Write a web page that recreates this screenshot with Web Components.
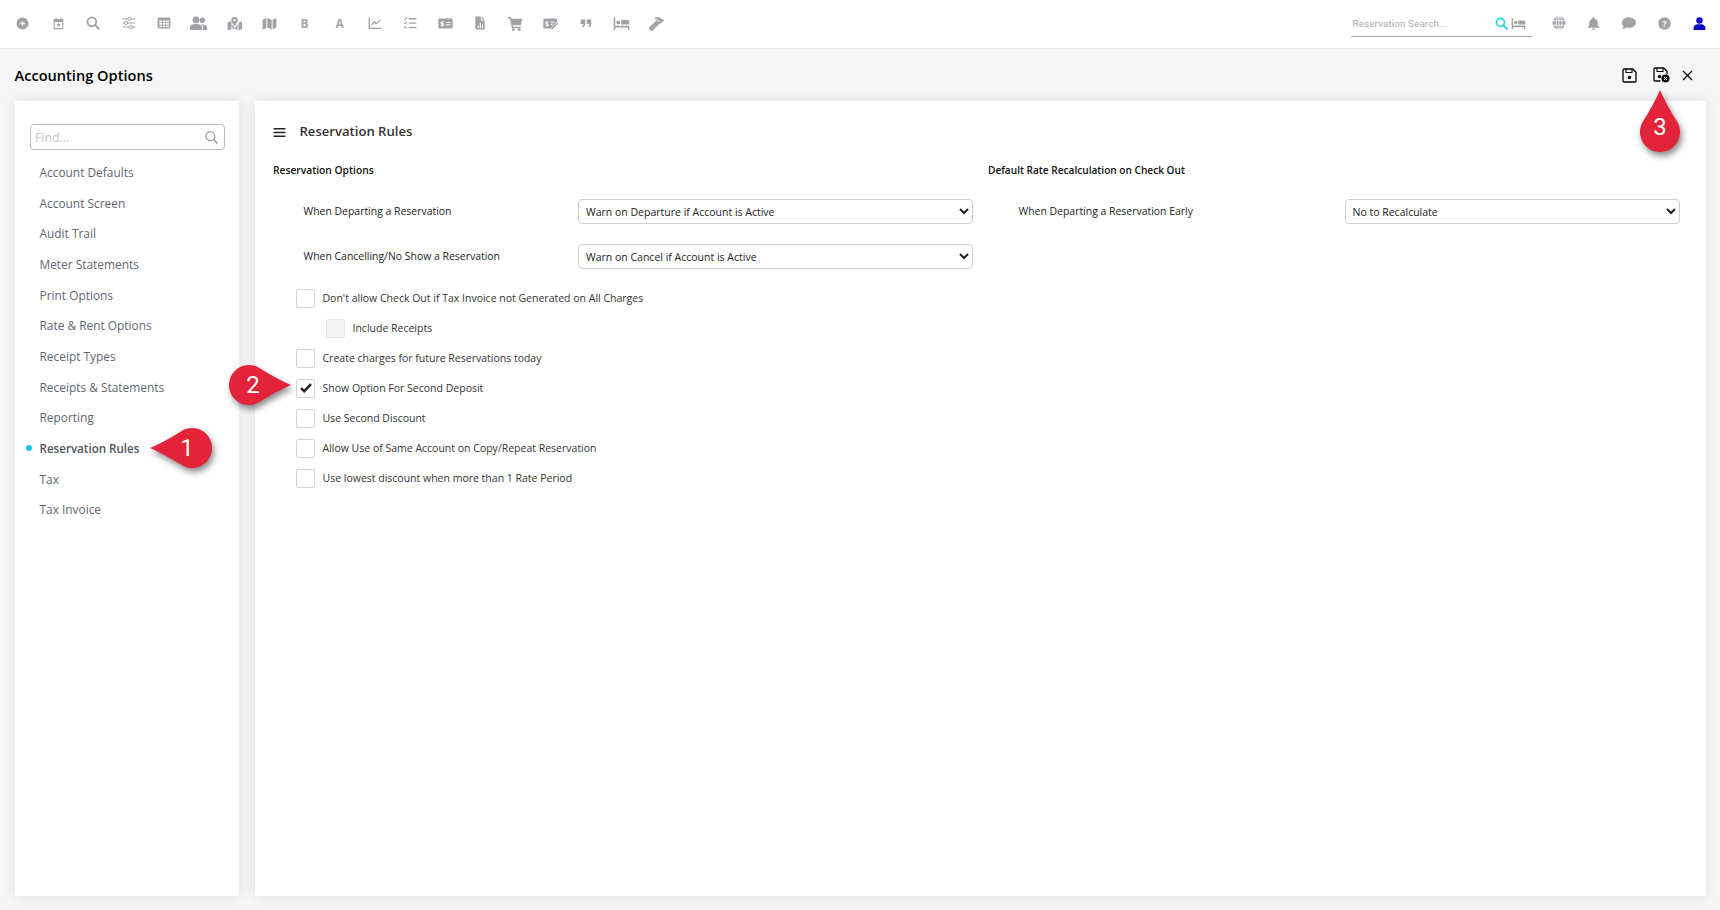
<!DOCTYPE html>
<html>
<head>
<meta charset="utf-8">
<title>Accounting Options</title>
<style>
html, body { margin: 0; height: 100%; }
body {
    background: #f6f6f7;
    font-family: "Open Sans", "Liberation Sans", sans-serif;
    overflow: hidden;
}
</style>
</head>
<body>
<app-shell>
    <top-bar slot="top"></top-bar>
    <page-header slot="header" heading="Accounting Options"></page-header>
    <side-nav slot="side">
        <nav-item>Account Defaults</nav-item>
        <nav-item>Account Screen</nav-item>
        <nav-item>Audit Trail</nav-item>
        <nav-item>Meter Statements</nav-item>
        <nav-item>Print Options</nav-item>
        <nav-item>Rate &amp; Rent Options</nav-item>
        <nav-item>Receipt Types</nav-item>
        <nav-item>Receipts &amp; Statements</nav-item>
        <nav-item>Reporting</nav-item>
        <nav-item active>Reservation Rules</nav-item>
        <nav-item>Tax</nav-item>
        <nav-item>Tax Invoice</nav-item>
    </side-nav>
    <rules-panel slot="main" heading="Reservation Rules">
        <div slot="left">
            <section-head>Reservation Options</section-head>
            <form-row label="When Departing a Reservation" value="Warn on Departure if Account is Active" style="--label-w:305px;--select-w:395px"></form-row>
            <form-row label="When Cancelling/No Show a Reservation" value="Warn on Cancel if Account is Active" style="--label-w:305px;--select-w:395px;margin-top:20px"></form-row>
            <check-list>
                <check-row>Don't allow Check Out if Tax Invoice not Generated on All Charges</check-row>
                <check-row sub disabled>Include Receipts</check-row>
                <check-row>Create charges for future Reservations today</check-row>
                <check-row checked>Show Option For Second Deposit</check-row>
                <check-row>Use Second Discount</check-row>
                <check-row>Allow Use of Same Account on Copy/Repeat Reservation</check-row>
                <check-row>Use lowest discount when more than 1 Rate Period</check-row>
            </check-list>
        </div>
        <div slot="right">
            <section-head style="font-size:10.100px">Default Rate Recalculation on Check Out</section-head>
            <form-row label="When Departing a Reservation Early" value="No to Recalculate" style="--label-w:356.5px;--select-w:335px"></form-row>
        </div>
    </rules-panel>
</app-shell>
<call-out num="1" dir="left" x="150" y="448"></call-out>
<call-out num="2" dir="right" x="291" y="385"></call-out>
<call-out num="3" dir="up" x="1660" y="90"></call-out>

<script>
const ICONS = {
    add: '<circle cx="12" cy="12" r="11"/><path d="M7.500 12h9M12 8.500v7" stroke="#fff" stroke-width="2.400" fill="none"/>',
    calendar: '<path d="M6.500 1.500h2v3h-2zM15.500 1.500h2v3h-2z"/><path d="M4.500 3.500h15a1.500 1.500 0 0 1 1.500 1.500v16a1.500 1.500 0 0 1-1.500 1.500h-15a1.500 1.500 0 0 1-1.500-1.500V5a1.500 1.500 0 0 1 1.500-1.500zm.5 5.500V20.500h14V9z" fill-rule="evenodd"/><path d="M12 10.500l1.200 2.600 2.800.3-2.100 1.900.6 2.800-2.500-1.400-2.500 1.400.6-2.800-2.100-1.900 2.800-.3z"/>',
    search: '<circle cx="10" cy="10" r="7.500" fill="none" stroke-width="3" stroke="currentColor"/><path d="M15.500 15.500l6.500 6.500" stroke="currentColor" stroke-width="3.400" stroke-linecap="round"/>',
    sliders: '<g stroke="currentColor" stroke-width="1.700" fill="none"><path d="M1 5h9M16 5h7M1 12h3M10 12h13M1 19h11M18 19h5"/><circle cx="13" cy="5" r="2.700"/><circle cx="7" cy="12" r="2.700"/><circle cx="15" cy="19" r="2.700"/></g>',
    table: '<rect x="1" y="2.500" width="22" height="19" rx="2.500"/><path d="M4 7.500h4.500v3H4zM10 7.500h4.500v3H10zM16 7.500h4.500v3H16zM4 12h4.500v3H4zM10 12h4.500v3H10zM16 12h4.500v3H16zM4 16.500h4.500v2.500H4zM10 16.500h4.500v2.500H10zM16 16.500h4.500v2.500H16z" fill="#fff"/>',
    people: '<circle cx="8.500" cy="7" r="4.800"/><circle cx="17.500" cy="7.500" r="3.800"/><path d="M0 21v-3.500C0 14 4 12.800 8.500 12.800S17 14 17 17.500V21z"/><path d="M15.500 13c4 .1 8.500 1.300 8.500 4.500V21h-5.500v-3.500c0-1.800-1.300-3.500-3-4.500z"/>',
    mapPin: '<path d="M12 1.500a5.300 5.300 0 0 1 5.300 5.300c0 3-3.300 6.600-5.300 9-2-2.400-5.300-6-5.300-9A5.300 5.300 0 0 1 12 1.500zm0 3.500a1.800 1.800 0 1 0 0 3.600 1.800 1.800 0 0 0 0-3.600z" fill-rule="evenodd"/><path d="M1 11l4.500-1.800c.4 1.300 1 2.400 1.700 3.500V22L1 24zM8.500 14.500c1.100 1.500 2.300 2.800 3.500 4.200v3.700l-3.500-1.300zM13.500 18.500c1.400-1.500 2.400-3 3.500-4.700V22l-3.500.8zM18.500 11.500l5.500-2.300v12.500L18.500 24z" transform="translate(0 -1)"/>',
    map: '<path d="M1 6l6-3v16l-6 3zM8.500 3l7 3v15.500l-7-3zM17 6l6-3v15.500l-6 3z"/>',
    chart: '<path d="M1 2.500h2.200V20H23v2.200H1z"/><path d="M6 15l5-5 3.500 3L21 6.500" fill="none" stroke="currentColor" stroke-width="2"/>',
    tasks: '<path d="M2 4.500l1.500 1.500L7 2.500M2 12l1.500 1.500L7 10" fill="none" stroke="currentColor" stroke-width="1.800"/><circle cx="4" cy="19.500" r="2"/><path d="M10 3.500h13v2.400H10zM10 11h13v2.400H10zM10 18.500h13v2.400H10z"/>',
    moneyCheck: '<rect x="0.500" y="4" width="23" height="16" rx="2"/><path d="M13 9.500h7v1.800h-7zM13 13h7v1.800h-7z" fill="#fff"/><text x="3.500" y="16.500" font-size="11" font-weight="700" fill="#fff" font-family="Open Sans, sans-serif">$</text>',
    fileChart: '<path d="M4 1h9.500v6.500H20V22a1 1 0 0 1-1 1H5a1 1 0 0 1-1-1z"/><path d="M15 1l5 5h-5z"/><path d="M8 17h2v3.500H8zM11.500 12h2v8.500h-2zM15 15h2v5.500h-2z" fill="#fff"/>',
    cart: '<path d="M0 1.500h4.600l.6 2.800H23l-2.400 10.400H7.800l.5 2.300H20v2.500H6.200L3 4H0z"/><circle cx="8.500" cy="21.800" r="2.200"/><circle cx="18" cy="21.800" r="2.200"/>',
    moneyEdit: '<path d="M2.500 4h18a2 2 0 0 1 2 2v3l-8.500 8.500-1 2.500H2.500a2 2 0 0 1-2-2V6a2 2 0 0 1 2-2z"/><path d="M12.500 9h6v1.700h-6zM12.500 12.500h3v1.700h-3z" fill="#fff"/><text x="3" y="15.500" font-size="10.500" font-weight="700" fill="#fff" font-family="Open Sans, sans-serif">$</text><path d="M23 10.500l1.500 1.500-8.500 8.500-3 1 1-3z"/>',
    quote: '<path d="M1.500 5h9v9c0 3.800-2.300 6-6 6.500v-3c1.800-.3 2.500-1.300 2.500-3.500H1.500zM13.500 5h9v9c0 3.800-2.300 6-6 6.500v-3c1.800-.3 2.500-1.300 2.500-3.500h-5.500z"/>',
    bed: '<path d="M1 3.500h2.200V15H23v6h-2.200v-3.200H3.200V21H1z"/><circle cx="7.500" cy="10.500" r="2.800"/><path d="M11.500 7H20a3 3 0 0 1 3 3v3.500H11.500z"/>',
    hammer: '<path d="M9 3.500c3.500-2.500 7.500-2.500 10 0l1.200 1.200 1.300-.3 2.500 2.500L18.500 12.500 16 10l.3-1.500-1.800-1.800C13 5.500 11 5 9 5z"/><path d="M12.500 6.500l5 5L6 23.200a2.500 2.500 0 0 1-3.500 0l-1.700-1.700a2.500 2.500 0 0 1 0-3.500z"/>',
    globe: '<circle cx="12" cy="12" r="11"/><g fill="none" stroke="#fff" stroke-width="1.400"><ellipse cx="12" cy="12" rx="5" ry="11"/><path d="M1 8h22M1 16h22M12 1v22"/></g>',
    bell: '<path d="M12 24a3 3 0 0 0 3-3H9a3 3 0 0 0 3 3zM20 16v-5.500c0-3.800-2.500-6.700-6-7.500V2a2 2 0 0 0-4 0v1c-3.500.8-6 3.700-6 7.500V16l-2.500 2.500V20h21v-1.500z"/>',
    chat: '<path d="M12 2C5.400 2 0 6.200 0 11.500c0 2.300 1 4.400 2.700 6C2.100 19.700 0 22 0 22c3.500 0 6-1.200 7.500-2.400 1.400.5 2.900.7 4.500.7 6.600 0 12-4.100 12-8.800S18.600 2 12 2z"/>',
    help: '<circle cx="12" cy="12" r="11.500"/><text x="12" y="18" text-anchor="middle" font-size="16" font-weight="700" fill="#fff" font-family="Open Sans, sans-serif">?</text>',
    user: '<circle cx="12" cy="6.500" r="6"/><path d="M1 24v-3.500C1 16 5 13.500 8.500 13.500h7c3.500 0 7.500 2.500 7.500 7V24z"/>',
    menu: '<path d="M1 3.500h22v3H1zM1 10.500h22v3H1zM1 17.500h22v3H1z"/>'
};

function svgIcon(name, size, color){
    return `<svg xmlns="http://www.w3.org/2000/svg" viewBox="0 0 24 24" width="${size}" height="${size}" fill="currentColor" style="color:${color};display:block">${ICONS[name]}</svg>`;
}

class AppShell extends HTMLElement{
    constructor(){
        super();
        this.attachShadow({mode:'open'});
        this.shadowRoot.innerHTML = `
        <style>
        :host{ display:flex; flex-direction:column; height:910px; }
        .cards{
            flex:1;
            min-height:0;
            display:grid;
            grid-template-columns:224px 1fr;
            gap:16px;
            padding:0 14px 14px 15px;
        }
        </style>
        <slot name="top"></slot>
        <slot name="header"></slot>
        <div class="cards">
            <slot name="side"></slot>
            <slot name="main"></slot>
        </div>`;
    }
}

class TopBar extends HTMLElement{
    constructor(){
        super();
        this.attachShadow({mode:'open'});
        const left = ['add','calendar','search','sliders','table','people','mapPin','map','B','A','chart','tasks','moneyCheck','fileChart','cart','moneyEdit','quote','bed','hammer'];
        const sizes = {add:13, calendar:13, search:14, sliders:14, table:14, people:17, mapPin:15, map:15, chart:14, tasks:14, moneyCheck:15, fileChart:14, cart:15, moneyEdit:15, quote:12, bed:17, hammer:15};
        const tools = left.map(n => ICONS[n]
            ? `<span class="tool">${svgIcon(n, sizes[n], '#a0a2a7')}</span>`
            : `<span class="tool txt">${n}</span>`).join('');
        this.shadowRoot.innerHTML = `
        <style>
        :host{
            display:flex;
            align-items:center;
            height:48px;
            box-sizing:content-box;
            background:#fff;
            border-bottom:1px solid #ecedf4;
            padding-left:5.400px;
            font-family:"Open Sans","Liberation Sans",sans-serif;
        }
        .tool{ width:35.200px; display:flex; justify-content:center; align-items:center; height:24px; flex:none; position:relative; top:-1px; }
        .txt{ color:#a4a6aa; font-size:12px; font-weight:700; }
        .search{
            margin-left:auto;
            width:178px;
            height:25px;
            margin-top:-1px;
            box-sizing:content-box;
            border-bottom:1px solid #a8a9ad;
            display:flex;
            align-items:center;
            font-size:9.900px;
            color:#a9abae;
            padding-left:2px;
            padding-right:1px;
        }
        .search span{ flex:1; font-family:Roboto,"Open Sans",sans-serif; letter-spacing:.1px; }
        .search svg{ margin-right:3px; }
        .search svg:last-of-type{ margin-right:5px; }
        .right{ display:flex; margin-left:9.500px; margin-right:3px; }
        .right .tool{ width:35.200px; }
        </style>
        ${tools}
        <div class="search">
            <span>Reservation Search...</span>
            ${svgIcon('search', 13, '#22cfe0')}
            ${svgIcon('bed', 15, '#a0a2a7')}
        </div>
        <div class="right">
            <span class="tool">${svgIcon('globe', 14, '#a0a2a7')}</span>
            <span class="tool">${svgIcon('bell', 13, '#a0a2a7')}</span>
            <span class="tool">${svgIcon('chat', 14, '#a0a2a7')}</span>
            <span class="tool">${svgIcon('help', 13, '#a0a2a7')}</span>
            <span class="tool">${svgIcon('user', 13, '#0a0ac4')}</span>
        </div>`;
    }
}

class PageHeader extends HTMLElement{
    constructor(){
        super();
        this.attachShadow({mode:'open'});
        this.shadowRoot.innerHTML = `
        <style>
        :host{
            display:flex;
            align-items:center;
            height:52px;
            padding:0 27px 0 14.500px;
            font-family:"Open Sans","Liberation Sans",sans-serif;
        }
        h1{ margin:0; font-size:14.600px; font-weight:600; color:#000; flex:1; }
        svg{ display:block; }
        .acts{ display:flex; align-items:center; }
        </style>
        <h1>${this.getAttribute('heading')}</h1>
        <div class="acts">
            <svg width="15" height="15" viewBox="0 0 15 15" fill="none" stroke="#000" stroke-width="1.300" style="margin-right:16px">
                <path d="M2.200 1h8.500L14 4.300v8.500a1.200 1.200 0 0 1-1.200 1.200H2.200A1.200 1.200 0 0 1 1 12.800V2.200A1.200 1.200 0 0 1 2.200 1z"/>
                <path d="M4 1.200v3.300h6V1.200" stroke-width="1.100"/>
                <circle cx="7.500" cy="9.500" r="1.700" fill="#000" stroke="none"/>
            </svg>
            <svg width="17" height="16" viewBox="0 0 17 16" fill="none" stroke="#000" stroke-width="1.300" style="margin-right:12px">
                <path d="M2.200 1h8.500L14 4.300v3M7.500 14H2.200A1.200 1.200 0 0 1 1 12.800V2.200A1.200 1.200 0 0 1 2.200 1"/>
                <path d="M4 1.200v3.300h6V1.200" stroke-width="1.100"/>
                <circle cx="6.500" cy="9.500" r="1.700" fill="#000" stroke="none"/>
                <circle cx="12.500" cy="11.500" r="4" fill="#111" stroke="none"/>
                <path d="M11 10l3 3M14 10l-3 3" stroke="#fff" stroke-width="1"/>
            </svg>
            <svg width="11" height="11" viewBox="0 0 11 11" stroke="#000" stroke-width="1.300" fill="none">
                <path d="M1 1l9 9M10 1l-9 9"/>
            </svg>
        </div>`;
    }
}

const sideNavTemplate = document.createElement('template');
sideNavTemplate.innerHTML = `
<style>
:host{
    display:block;
    background:#fff;
    box-shadow:0 0 12px rgba(120,120,140,.18);
    padding:23px 14px 0 15px;
    font-family:"Open Sans","Liberation Sans",sans-serif;
}
.find{
    height:26px;
    box-sizing:border-box;
    border:1px solid #b8b8b8;
    border-radius:4px;
    display:flex;
    align-items:center;
    padding:0 6px 0 4px;
    margin-bottom:6.500px;
}
.find span{ flex:1; color:#c6c6c6; font-size:12.300px; }
</style>
<div class="find">
    <span>Find...</span>
    <svg width="13" height="13" viewBox="0 0 13 13" fill="none" stroke="#8c8c8c" stroke-width="1.100"><circle cx="5.300" cy="5.300" r="4.500"/><path d="M8.500 8.500l4 4" stroke-width="1.500"/></svg>
</div>
<slot></slot>`;

class SideNav extends HTMLElement{
    constructor(){
        super();
        this.attachShadow({mode:'open'});
        this.shadowRoot.appendChild(sideNavTemplate.content.cloneNode(true));
    }
}

class NavItem extends HTMLElement{
    constructor(){
        super();
        this.attachShadow({mode:'open'});
        this.shadowRoot.innerHTML = `
        <style>
        :host{
            display:flex;
            align-items:center;
            height:30.700px;
            padding-left:9.500px;
            font-size:11.900px;
            color:#5f6672;
            position:relative;
        }
        :host([active]){ font-weight:600; font-size:11.600px; color:#4d5562; }
        :host([active])::before{
            content:"";
            position:absolute;
            left:-4px; top:12.500px;
            width:6px; height:6px;
            border-radius:50%;
            background:#19c9d9;
        }
        </style>
        <slot></slot>`;
    }
}

class RulesPanel extends HTMLElement{
    constructor(){
        super();
        this.attachShadow({mode:'open'});
        this.shadowRoot.innerHTML = `
        <style>
        :host{
            display:block;
            background:#fff;
            box-shadow:0 0 12px rgba(120,120,140,.18);
            padding:20px 0 0 18px;
            font-family:"Open Sans","Liberation Sans",sans-serif;
        }
        .head{ display:flex; align-items:center; height:20px; }
        .head svg{ position:relative; top:1px; }
        .head h2{ margin:0 0 0 13.500px; font-size:13.100px; font-weight:600; color:#333; }
        .cols{ display:grid; grid-template-columns:715px 1fr; margin-top:18.500px; }
        </style>
        <div class="head">
            ${svgIcon('menu', 13, '#222')}
            <h2>${this.getAttribute('heading')}</h2>
        </div>
        <div class="cols">
            <slot name="left"></slot>
            <slot name="right"></slot>
        </div>`;
    }
}

class SectionHead extends HTMLElement{
    constructor(){
        super();
        this.attachShadow({mode:'open'});
        this.shadowRoot.innerHTML = `
        <style>
        :host{
            display:flex;
            align-items:center;
            height:20px;
            margin-bottom:19.500px;
            font-size:10.250px;
            font-weight:600;
            color:#111;
        }
        </style>
        <slot></slot>`;
    }
}

class FormRow extends HTMLElement{
    constructor(){
        super();
        this.attachShadow({mode:'open'});
        this.shadowRoot.innerHTML = `
        <style>
        :host{
            display:flex;
            align-items:center;
            height:25px;
            font-size:10.450px;
            color:#222;
        }
        label{ width:calc(var(--label-w) - 30.500px); margin-left:30.500px; flex:none; position:relative; top:-1px; }
        select{
            width:var(--select-w);
            height:25px;
            box-sizing:border-box;
            background:#fff;
            border:1px solid #cfcfcf;
            border-radius:4px;
            font:10.500px "Open Sans","Liberation Sans",sans-serif;
            color:#222;
            padding:0 3px;
            margin:0;
        }
        </style>
        <label>${this.getAttribute('label')}</label>
        <select><option>${this.getAttribute('value')}</option></select>`;
    }
}

class CheckList extends HTMLElement{
    constructor(){
        super();
        this.attachShadow({mode:'open'});
        this.shadowRoot.innerHTML = `
        <style>
        :host{ display:block; margin-top:14px; padding-left:23px; }
        </style>
        <slot></slot>`;
    }
}

class CheckRow extends HTMLElement{
    constructor(){
        super();
        this.attachShadow({mode:'open'});
        this.shadowRoot.innerHTML = `
        <style>
        :host{
            display:flex;
            align-items:center;
            height:30px;
            gap:7.500px;
            font-size:10.500px;
            color:#333;
        }
        :host([sub]){ padding-left:30px; }
        .box{
            width:19px; height:19px;
            box-sizing:border-box;
            border:1px solid #d4d4d4;
            border-radius:2px;
            background:#fff;
            display:flex;
            align-items:center;
            justify-content:center;
            flex:none;
        }
        :host([disabled]) .box{ background:#f3f3f0; border-color:#e6e6e3; }
        </style>
        <span class="box">${this.hasAttribute('checked') ? '<svg width="12" height="10" viewBox="0 0 12 10" fill="none" stroke="#222" stroke-width="2.400"><path d="M1 5.200l3.200 3L11 1.200"/></svg>' : ''}</span>
        <span><slot></slot></span>`;
    }
}

// callouts sit on top of the page, they point at what the step is about
class CallOut extends HTMLElement{
    constructor(){
        super();
        this.attachShadow({mode:'open'});
        const dir = this.getAttribute('dir');
        const x = +this.getAttribute('x');
        const y = +this.getAttribute('y');
        const up = dir === 'up';
        const w = up ? 40 : 62;
        const h = up ? 62 : 40;
        const left = up ? x - 20 : (dir === 'left' ? x : x - 62);
        const top = up ? y : y - 20;
        const rot = {up:'', left:'rotate(-90 31 31)', right:'rotate(90 31 31)'}[dir];
        const vb = up ? '0 0 40 62' : '0 11 62 40';
        const shape = 'M20 0Q26 14 37.600 32.500A20 20 0 1 1 2.400 32.500Q14 14 20 0Z';
        const pin = up
            ? `<path d="${shape}"/>`
            : `<g transform="${rot}"><path transform="translate(11 0)" d="${shape}"/></g>`;
        const nx = up ? 20 : (dir === 'left' ? 37 : 24);
        const ny = up ? 37 : 20;
        this.shadowRoot.innerHTML = `
        <style>
        :host{
            position:absolute;
            left:${left}px;
            top:${top}px;
            width:${w}px;
            height:${h}px;
            display:block;
        }
        svg{ display:block; overflow:visible; filter:drop-shadow(2px 4px 3px rgba(0,0,0,.45)); }
        span{
            position:absolute;
            left:${nx}px; top:${ny}px;
            transform:translate(-50%,-50%);
            color:#fff;
            font:24px Roboto,"Liberation Sans",sans-serif;
        }
        </style>
        <svg width="${w}" height="${h}" viewBox="${vb}" fill="#e32339">${pin}</svg>
        <span>${this.getAttribute('num')}</span>`;
    }
}

customElements.define('app-shell', AppShell);
customElements.define('top-bar', TopBar);
customElements.define('page-header', PageHeader);
customElements.define('side-nav', SideNav);
customElements.define('nav-item', NavItem);
customElements.define('rules-panel', RulesPanel);
customElements.define('section-head', SectionHead);
customElements.define('form-row', FormRow);
customElements.define('check-list', CheckList);
customElements.define('check-row', CheckRow);
customElements.define('call-out', CallOut);
</script>
</body>
</html>
